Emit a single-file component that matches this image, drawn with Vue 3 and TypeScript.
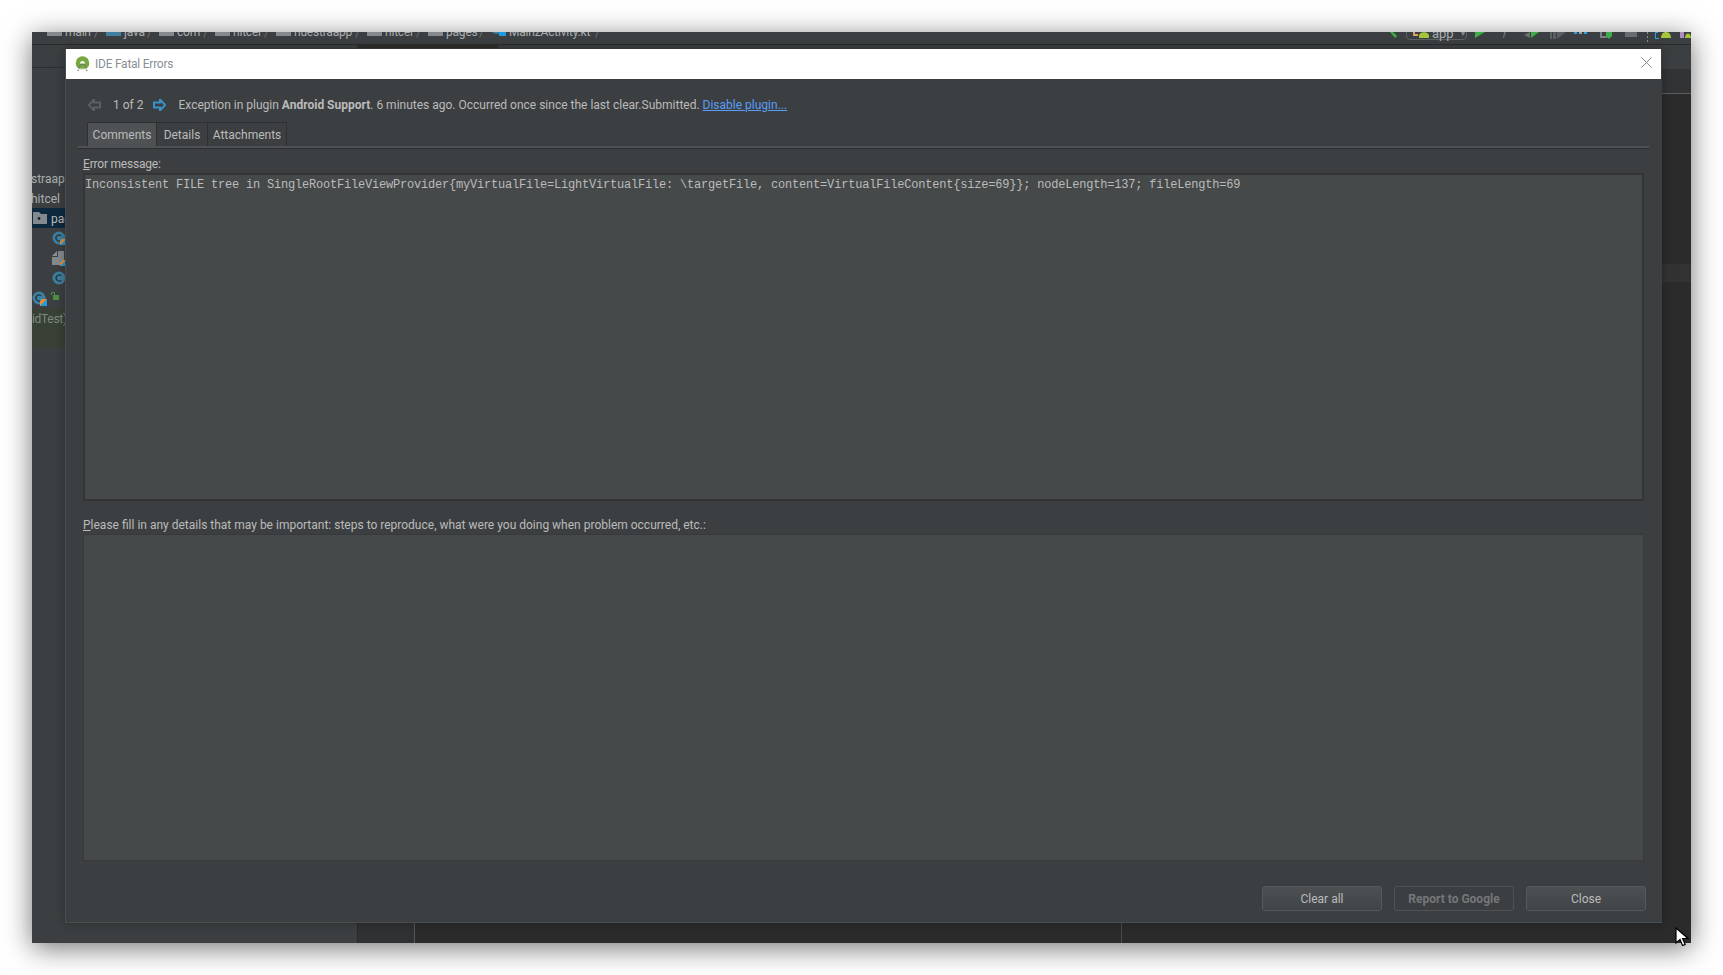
<script setup lang="ts">
interface Crumb { id: number; label: string; kind: 'folder' | 'blue' | 'kt'; width: number }
const crumbs: Crumb[] = [
  { id: 1, label: 'main', kind: 'folder', width: 59 },
  { id: 2, label: 'java', kind: 'blue', width: 53 },
  { id: 3, label: 'com', kind: 'folder', width: 56 },
  { id: 4, label: 'hitcel', kind: 'folder', width: 61 },
  { id: 5, label: 'nuestraapp', kind: 'folder', width: 91 },
  { id: 6, label: 'hitcel', kind: 'folder', width: 61 },
  { id: 7, label: 'pages', kind: 'folder', width: 63 },
  { id: 8, label: 'MainzActivity.kt', kind: 'kt', width: 116 }
]
const mono = 'Inconsistent FILE tree in SingleRootFileViewProvider{myVirtualFile=LightVirtualFile: \\targetFile, content=VirtualFileContent{size=69}}; nodeLength=137; fileLength=69'
</script>

<template>
  <div class="page">
    <div class="window">
      <div class="top">
        <div class="crumbs">
          <div v-for="c in crumbs" :key="c.id" class="crumb" :style="{ width: c.width + 'px' }">
            <svg v-if="c.kind !== 'kt'" width="15" height="12" viewBox="0 0 15 12"><rect y="1" width="15" height="11" :fill="c.kind === 'blue' ? '#3f7f9f' : '#83898d'" /><circle v-if="c.kind === 'folder'" cx="7" cy="6" r="1.4" fill="#3c3f41" /></svg>
            <svg v-else width="15" height="12" viewBox="0 0 15 12"><circle cx="6" cy="3" r="7" fill="#3f7f9f" /><path d="M8 0h7l-4 5z" fill="#f08a2c" /><path d="M8 6h7v6H8z" fill="#1f9be0" /><path d="M8 6l5-6h2l-6 7z" fill="#f08a2c" /></svg>
            <span class="crumb-text">{{ c.label }}</span>
            <span class="slash">/</span>
          </div>
        </div>
        <div class="tools">
          <svg class="back" width="8" height="8" viewBox="0 0 8 8"><path d="M0 0h3l4 4-2 2z" fill="#3dae47" /></svg>
          <div class="config">
            <svg width="17" height="10" viewBox="0 0 17 10"><path d="M1 0h2v6h3v2H1z" fill="#d9a56c" /><path d="M7 8c0-5 10-5 10 0z" fill="#a4c639" /><rect x="7" y="8" width="10" height="2" fill="#a4c639" /></svg>
            <span class="config-text">app</span>
            <span class="drop">▾</span>
          </div>
          <svg class="toolset" width="216" height="12" viewBox="0 0 216 12">
            <path d="M0 0h10L0 6z" fill="#3dae47" />
            <path d="M29 0h2l-2 6h-1z" fill="#6b6e70" />
            <path d="M49 3l6-3v6z" fill="#6b6e70" /><path d="M56 0h8l-8 6z" fill="#3dae47" />
            <rect x="75" width="2" height="7" fill="#5c5f61" /><rect x="78" width="3" height="7" fill="#5c5f61" /><path d="M82 0h9l-9 7z" fill="#5c5f61" />
            <rect x="99" y="0" width="3" height="2" fill="#2f9fe3" /><rect x="104" y="0" width="3" height="2" fill="#9aa0a4" /><rect x="109" y="0" width="3" height="2" fill="#2f9fe3" />
            <path d="M125 0h2v4h5v2h-7z" fill="#7d8184" /><rect x="131" width="6" height="4" fill="#3dae47" /><path d="M131 4h6l-3 3z" fill="#3dae47" />
            <rect x="150" width="12" height="5" fill="#6a6d6f" />
            <rect x="172" y="0" width="1" height="2" fill="#8a8d8f" /><rect x="172" y="4" width="1" height="2" fill="#8a8d8f" /><rect x="172" y="8" width="1" height="2" fill="#8a8d8f" />
            <path d="M180 0h3v1h-2v5h3v1h-4z" fill="#2f9fe3" /><path d="M186 6c0-8 10-8 10 0z" fill="#a4c639" />
            <path d="M205 0h4v6h-4z" fill="#b08ac0" /><path d="M210 6c0-6 6-6 6 0z" fill="#a4c639" />
          </svg>
        </div>
      </div>
      <div class="main">
        <aside class="side">
          <div class="side-head"></div>
          <div class="tree">
            <div class="row"><span class="row-text">straapp</span></div>
            <div class="row"><span class="row-text">hitcel</span></div>
            <div class="row selected">
              <svg width="14" height="12" viewBox="0 0 14 12"><path d="M0 0h6l2 2h6v10H0z" fill="#83898d" /><circle cx="6" cy="6.500" r="1.400" fill="#0d293e" /></svg>
              <span class="row-text pag">pages</span>
            </div>
            <div class="row icon-row">
              <svg width="14" height="14" viewBox="0 0 14 14"><circle cx="7" cy="7" r="6.500" fill="#3f7f9f" /><path d="M9 4.800a3 3 0 1 0 0 4.400" fill="none" stroke="#27343d" stroke-width="1.300" /><rect x="8" y="8" width="6" height="6" fill="#1f9be0" /><path d="M8 14l6-6H10l-2 3z" fill="#f08a2c" /></svg>
            </div>
            <div class="row icon-row">
              <svg width="14" height="16" viewBox="0 0 14 16"><path d="M0 6l5-5v5z" fill="#8d9296" /><path d="M6 1h6v9H8v5H0V7h6z" fill="#83898d" /><rect x="8" y="10" width="6" height="6" fill="#1f9be0" /><path d="M8 16l6-6h-4l-2 3z" fill="#f08a2c" /></svg>
            </div>
            <div class="row icon-row">
              <svg width="14" height="14" viewBox="0 0 14 14"><circle cx="7" cy="7" r="6.500" fill="#3f7f9f" /><path d="M9.200 4.800a3 3 0 1 0 0 4.400" fill="none" stroke="#27343d" stroke-width="1.300" /></svg>
            </div>
            <div class="row">
              <svg width="15" height="15" viewBox="0 0 15 15"><circle cx="7" cy="7" r="6.500" fill="#3f7f9f" /><path d="M9 4.800a3 3 0 1 0 0 4.400" fill="none" stroke="#27343d" stroke-width="1.300" /><rect x="8" y="8" width="7" height="7" fill="#1f9be0" /><path d="M8 15l7-7h-5l-2 3z" fill="#f08a2c" /></svg>
              <svg class="lock" width="8" height="8" viewBox="0 0 8 8"><path d="M.5 3V.5h3V3" fill="none" stroke="#4d8f3f" /><rect x="2" y="3" width="6" height="5" fill="#4d8f3f" /></svg>
            </div>
            <div class="green"><span class="row-text test">idTest)</span></div>
          </div>
        </aside>
        <section class="edit">
          <div class="tabbar"><div class="active-tab"></div></div>
          <div class="navbar"></div>
          <div class="code">
            <div class="gutter"></div>
            <div class="pane pane-left"></div>
            <div class="pane pane-right"><div class="caret-row"></div></div>
          </div>
        </section>
      </div>

      <div class="dialog">
        <header class="title">
          <svg class="logo" width="15" height="16" viewBox="0 0 15 16">
            <circle cx="7.500" cy="7" r="6.800" fill="#78a840" />
            <path d="M5 7.500c0-3.400 5-3.400 5 0z" fill="#fff" />
            <path d="M5.500 8.500h4l2.600 6.500M9.500 8.500h-4L2.900 15" fill="none" stroke="#6a8462" stroke-width="1.200" />
            <rect x="3" y="12.500" width="9" height="1.500" fill="#dfe8d6" />
          </svg>
          <span class="title-text">IDE Fatal Errors</span>
          <svg class="close" width="11" height="11" viewBox="0 0 11 11"><path d="M.5.5l10 10M10.500.5l-10 10" stroke="#8b8b8b" stroke-width="1" fill="none" /></svg>
        </header>
        <div class="content">
          <div class="nav">
            <svg class="prev" width="13" height="12" viewBox="0 0 13 12"><path d="M6 .5L.8 6 6 11.500V8.500h6v-5H6z" fill="none" stroke="#5c6062" stroke-width="2" /></svg>
            <span class="count">1 of 2</span>
            <svg class="next" width="13" height="12" viewBox="0 0 13 12"><path d="M7 .5L12.200 6 7 11.500V8.500H1v-5h6z" fill="none" stroke="#3b92c9" stroke-width="2" /></svg>
            <span class="msg">Exception in plugin <b>Android Support</b>. 6 minutes ago. Occurred once since the last clear.Submitted. <a class="link">Disable plugin...</a></span>
          </div>
          <div class="tabs">
            <div class="tab on t-comments">Comments</div>
            <div class="tab t-details">Details</div>
            <div class="tab t-attach">Attachments</div>
          </div>
          <div class="rule"></div>
          <label class="lbl first"><u>E</u>rror message:</label>
          <div class="box strong"><span class="mono">{{ mono }}</span></div>
          <label class="lbl second"><u>P</u>lease fill in any details that may be important: steps to reproduce, what were you doing when problem occurred, etc.:</label>
          <div class="box plain"></div>
          <div class="buttons">
            <button class="btn">Clear all</button>
            <button class="btn off">Report to Google</button>
            <button class="btn">Close</button>
          </div>
        </div>
      </div>

      <svg class="cursor" width="14" height="21" viewBox="0 0 14 21">
        <path d="M1 1v15l4-3.500 2.600 6 2.600-1.100-2.600-5.900H13z" fill="#fff" stroke="#000" stroke-width="1.200" />
      </svg>
    </div>
  </div>
</template>

<style scoped>
.page {
  box-sizing: border-box;
  width: 1723px;
  height: 975px;
  padding: 32px;
  overflow: hidden;
  background: #fff;
  font-family: Roboto, "Noto Sans", "Liberation Sans", sans-serif;
  font-size: 12px;
  color: #bbb;
}
.window {
  position: relative;
  display: flex;
  flex-direction: column;
  height: 911px;
  background: #3c3f41;
  box-shadow: 0 5px 26px rgba(0, 0, 0, .55);
}
.top {
  display: flex;
  justify-content: space-between;
  height: 12px;
  overflow: hidden;
  border-bottom: 1px solid #2a2c2d;
  background: #3c3f41;
}
.crumbs { display: flex; align-items: flex-start; margin-left: 15px; }
.crumb { display: flex; align-items: flex-start; flex: none; white-space: nowrap; }
.crumb svg { flex: none; margin-top: -8px; }
.crumb-text { margin: -8px 0 0 3px; line-height: 17px; font-size: 12px; letter-spacing: -.2px; color: #a9adb0; }
.slash { margin: -9px 0 0 auto; padding-right: 6px; line-height: 18px; color: #777b7e; font-size: 15px; font-weight: 300; }
.tools { display: flex; align-items: flex-start; }
.config {
  display: flex;
  align-items: center;
  box-sizing: border-box;
  width: 61px;
  height: 17px;
  margin: -9px 8px 0;
  padding: 3px 0 0 5px;
  border: 1px solid #5e6163;
  border-radius: 4px;
}
.config-text { margin-left: 3px; color: #a9adb0; font-size: 13px; }
.drop { margin-left: 7px; font-size: 8px; color: #8a8d8f; }
.main { flex: 1; display: flex; min-height: 0; }
.side { width: 325px; flex: none; overflow: hidden; }
.side-head { height: 22px; border-bottom: 1px solid #2c2e2f; }
.tree { padding-top: 100px; }
.row { display: flex; align-items: center; height: 20px; white-space: nowrap; }
.row-text { margin: 2px 0 0 -1px; font-size: 12px; color: #a9adb0; }
.selected { padding-left: 1px; background: #0d293e; }
.pag { margin-left: 4px; color: #bbb; }
.icon-row { padding-left: 20px; }
.lock { margin: -4px 0 0 4px; }
.green { display: flex; align-items: flex-start; height: 40px; background: #394036; }
.test { margin: 0; line-height: 22px; letter-spacing: -.3px; color: #7d8a7d; }
.edit { flex: 1; display: flex; flex-direction: column; min-width: 0; }
.tabbar { height: 24px; background: #3c3f41; }
.active-tab { width: 141px; height: 3px; background: #2f2f2b; }
.navbar { height: 24px; border-bottom: 1px solid #5a5c5e; background: #313335; }
.code { flex: 1; display: flex; background: #2b2b2b; }
.gutter { flex: none; width: 56px; background: #303132; border-left: 1px solid #28292a; border-right: 1px solid #555759; }
.pane { height: 100%; }
.pane-left { flex: none; width: 706px; border-right: 1px solid #4a4c4e; }
.pane-right { flex: 1; padding-top: 170px; }
.caret-row { height: 18px; background: #323232; }
.dialog {
  position: absolute;
  left: 33px;
  top: 17px;
  display: flex;
  flex-direction: column;
  box-sizing: border-box;
  width: 1597px;
  height: 874px;
  border-left: 1px solid #4a4d4f;
  border-bottom: 1px solid #4a4d4f;
  background: #3c3f41;
  box-shadow: 0 0 10px rgba(0, 0, 0, .28);
}
.title {
  display: flex;
  align-items: center;
  flex: none;
  height: 30px;
  margin-right: 1px;
  padding: 0 9px;
  background: #fff;
}
.logo { flex: none; }
.title-text { margin-left: 5px; letter-spacing: -.25px; color: #8a8f94; }
.close { margin: -3px 0 0 auto; }
.content { display: flex; flex-direction: column; flex: 1; min-height: 0; padding: 0 18px 0 17px; }
.nav { display: flex; align-items: center; height: 22px; margin: 15px 0 6px; white-space: nowrap; }
.prev { margin-left: 5px; }
.count { margin-left: 12px; }
.next { margin-left: 10px; }
.msg { margin-left: 12px; }
.msg b { font-weight: 700; }
.link { color: #589df6; text-decoration: underline; }
.tabs { display: flex; height: 24px; margin-left: 4px; }
.tab {
  box-sizing: border-box;
  margin-right: -1px;
  line-height: 24px;
  text-align: center;
  border: 1px solid #2d2f30;
  border-bottom: 0;
}
.t-comments { width: 70px; }
.t-details { width: 52px; }
.t-attach { width: 80px; }
.tab.on { background: #4e5254; }
.rule {
  height: 2px;
  margin: 0 -5px;
  background: #4e5254;
  border-bottom: 1px solid #2d2f30;
}
.lbl { display: block; box-sizing: border-box; white-space: nowrap; line-height: 17px; }
.first { height: 24px; padding-top: 7px; letter-spacing: -.2px; }
.second { height: 33px; padding-top: 16px; }
.box { flex: none; box-sizing: border-box; background: #45494a; }
.strong { height: 328px; padding-top: 2px; border: 2px solid #333536; }
.plain { height: 327px; border: 1px solid #37393a; }
.mono {
  font-family: "Liberation Mono", monospace;
  font-size: 12px;
  line-height: 14px;
  letter-spacing: -.2px;
  color: #bbb;
  white-space: pre;
}
.buttons { display: flex; justify-content: flex-end; gap: 12px; margin: 25px -2px 0 0; }
.btn {
  width: 120px;
  height: 25px;
  padding: 0;
  border: 1px solid #56595b;
  border-radius: 3px;
  background: linear-gradient(#4c5052, #404446);
  color: #bbb;
  font: inherit;
}
.btn.off { background: transparent; color: #747779; font-weight: 700; border-color: #505355; }
.cursor { position: absolute; left: 1643px; top: 895px; }
</style>
